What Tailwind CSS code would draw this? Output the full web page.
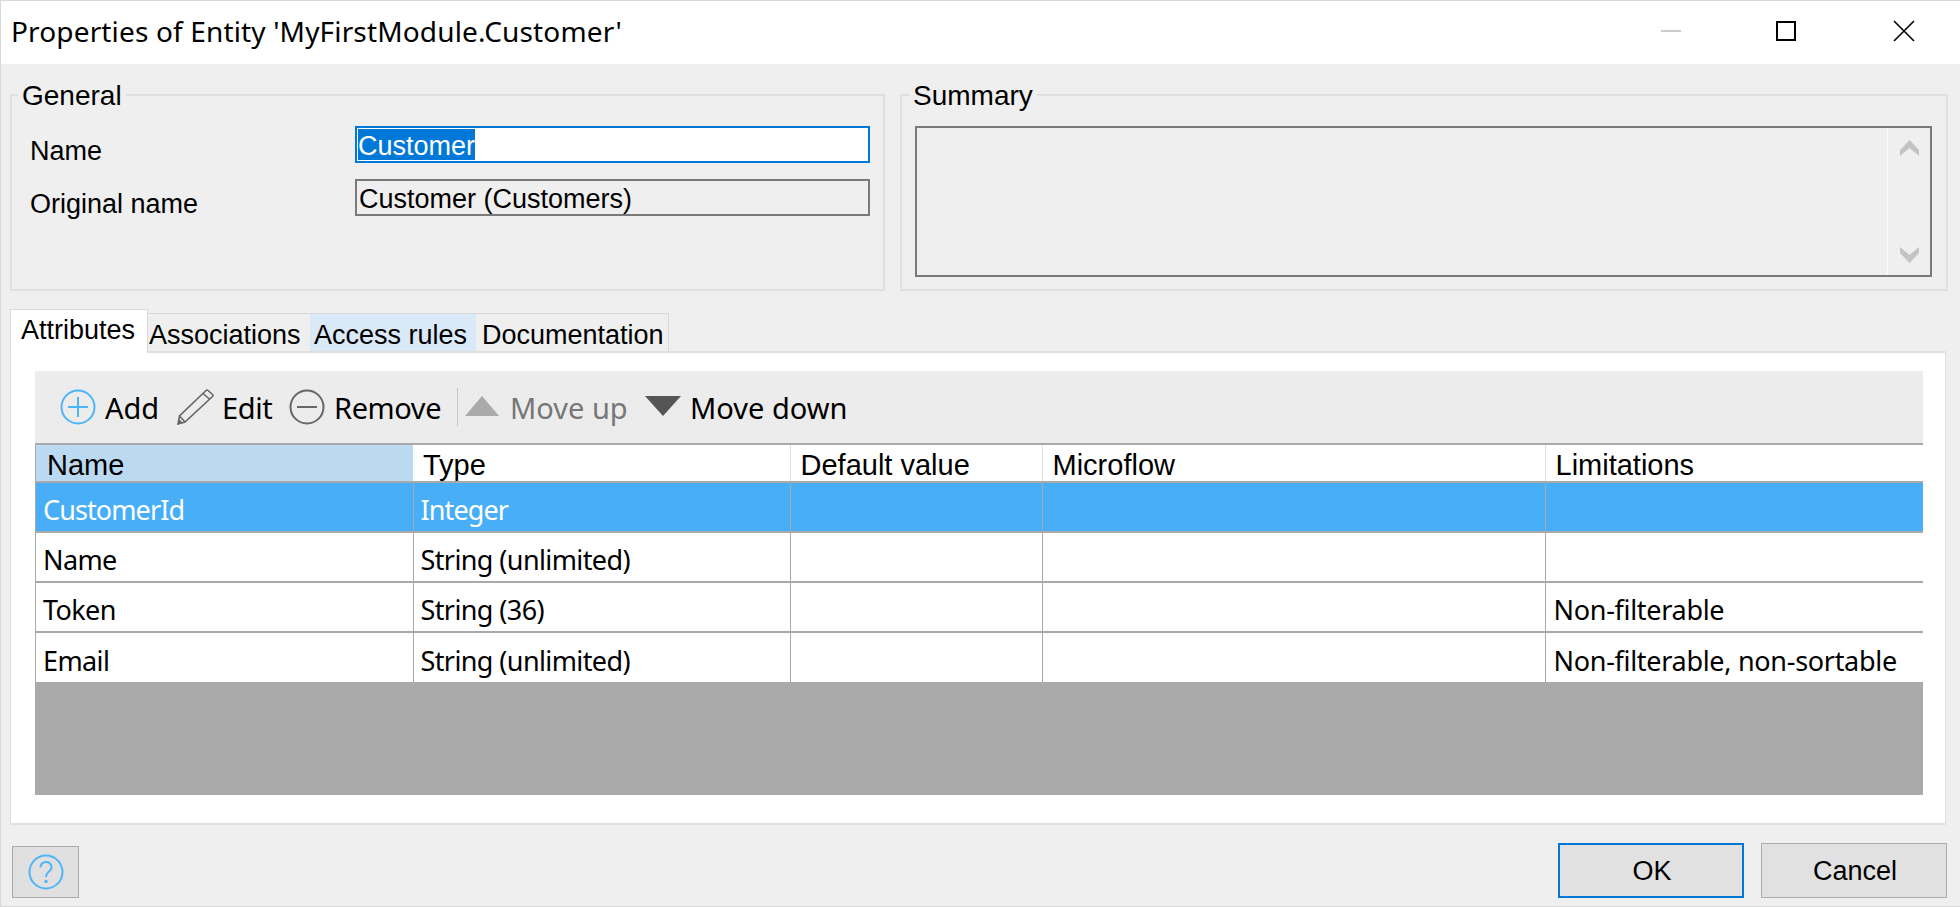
<!DOCTYPE html>
<html lang="en">
<head>
    <meta charset="UTF-8">
    <title>Properties of Entity</title>
    <script src="https://cdn.jsdelivr.net/npm/@tailwindcss/browser@4"></script>
</head>
<body class="bg-[#efefef] overflow-hidden">
    <div class="w-[1960px] h-[907px] flex flex-col border-t border-l border-b border-[#d9d9d9] font-['Liberation_Sans',sans-serif] text-[27px] text-black">

        <!-- Title bar -->
        <div class="h-[63px] shrink-0 bg-white flex items-center pl-[10px] pb-[4px] font-['Noto_Sans',sans-serif]">
            <div class="flex-1 text-[28px] tracking-[0.15px]">Properties of Entity 'MyFirstModule.Customer'</div>
            <svg width="20" height="20" viewBox="0 0 20 20" class="mr-[95px]"><path d="M0 10H20" stroke="#cccccc" stroke-width="2"/></svg>
            <svg width="20" height="20" viewBox="0 0 20 20" class="mr-[97px]"><rect x="1" y="1" width="18" height="18" fill="none" stroke="#000" stroke-width="2"/></svg>
            <svg width="22" height="22" viewBox="0 0 22 22" class="mr-[45px]"><path d="M1 1L21 21M21 1L1 21" stroke="#000" stroke-width="1.6"/></svg>
        </div>

        <!-- General and Summary -->
        <div class="flex gap-[15px] pl-[9px] pt-[30px] pr-[12px] h-[227px] shrink-0">
            <div class="relative w-[875px] h-[197px] border-2 border-[#e0e0e0]">
                <div class="absolute left-[6px] top-[-20px] bg-[#efefef] px-[4px] leading-[40px] text-[28px]">General</div>
                <div class="pl-[18px] pt-[30px] flex flex-col gap-[16px]">
                    <div class="flex items-center h-[37px]">
                        <div class="w-[325px] pt-[14px]">Name</div>
                        <div class="w-[515px] h-[37px] bg-white border-2 border-[#0078d7] flex items-center pl-[1px]">
                            <span class="h-[31px] bg-[#0078d7] text-white leading-[35px]">Customer</span>
                        </div>
                    </div>
                    <div class="flex items-center h-[37px]">
                        <div class="w-[325px] pt-[14px]">Original name</div>
                        <div class="w-[515px] h-[37px] border-2 border-[#7a7a7a] flex items-center pl-[2px] pt-[3px]">Customer (Customers)</div>
                    </div>
                </div>
            </div>
            <div class="relative flex-1 h-[197px] border-2 border-[#e0e0e0]">
                <div class="absolute left-[7px] top-[-20px] bg-[#efefef] px-[4px] leading-[40px] text-[28px]">Summary</div>
                <div class="mt-[30px] ml-[13px] w-[1017px] h-[151px] border-2 border-[#7a7a7a] flex justify-end">
                    <div class="w-[43px] border-l border-[#fafafa] flex flex-col items-center justify-between py-[12px]">
                        <svg width="19" height="16" viewBox="0 0 19 16"><path d="M9.5 0L19 10V16L9.5 8L0 16V10Z" fill="#c4c4c4"/></svg>
                        <svg width="19" height="16" viewBox="0 0 19 16"><path d="M9.5 16L19 6V0L9.5 8L0 0V6Z" fill="#c4c4c4"/></svg>
                    </div>
                </div>
            </div>
        </div>

        <!-- Tabs -->
        <div class="relative z-10 flex items-end h-[60px] shrink-0 pl-[9px]">
            <div class="w-[138px] h-[44px] mb-[-2px] bg-white border border-b-0 border-[#d9d9d9] pl-[10px]">Attributes</div>
            <div class="w-[162px] h-[38px] border-t border-[#d9d9d9] pl-[1px] pt-[1px]">Associations</div>
            <div class="w-[166px] h-[38px] bg-[#d9e9f8] border-t border-[#d9d9d9] pl-[4px] pt-[1px]">Access rules</div>
            <div class="w-[193px] h-[38px] border-t border-r border-[#d9d9d9] pl-[6px] pt-[1px]">Documentation</div>
        </div>

        <!-- Tab panel -->
        <div class="ml-[9px] w-[1936px] h-[474px] shrink-0 bg-white border-x border-y-2 border-[#e0e0e0] pl-[24px] pr-[22px] pt-[18px] pb-[28px] flex flex-col">
            <!-- Toolbar -->
            <div class="h-[72px] shrink-0 bg-[#ececec] flex items-center pl-[25px] font-['Noto_Sans',sans-serif] text-[29px]">
                <svg width="36" height="36" viewBox="0 0 36 36"><circle cx="18" cy="18" r="16.5" fill="none" stroke="#4db5fa" stroke-width="2"/><path d="M18 8V28M8 18H28" stroke="#4db5fa" stroke-width="2"/></svg>
                <span class="ml-[9px] w-[72px] pt-[2px]">Add</span>
                <svg width="38" height="36" viewBox="0 0 38 36"><path d="M1 35L2.5 27L29 1.5Q30 .7 31 1.5L35.5 5.5Q36.5 6.5 35.5 7.5L8 33Z M2.5 27L8 33 M26 4.5L33 10.5" fill="none" stroke="#666" stroke-width="1.6"/><path d="M1 35L2 30L6 34Z" fill="#666"/></svg>
                <span class="ml-[7px] w-[67px] pt-[2px] tracking-[-0.4px]">Edit</span>
                <svg width="36" height="36" viewBox="0 0 36 36"><circle cx="18" cy="18" r="16.5" fill="none" stroke="#666" stroke-width="2"/><path d="M8 18H28" stroke="#666" stroke-width="2"/></svg>
                <span class="ml-[9px] w-[123px] pt-[2px] tracking-[-0.4px]">Remove</span>
                <div class="w-px h-[38px] bg-[#c8c8c8]"></div>
                <svg width="34" height="20" viewBox="0 0 34 20" class="ml-[7px] mb-[2px]"><path d="M17 0L34 20H0Z" fill="#aaaaaa"/></svg>
                <span class="ml-[11px] w-[135px] pt-[2px] text-[#777777]">Move up</span>
                <svg width="36" height="20" viewBox="0 0 36 20" class="mb-[2px]"><path d="M0 0H36L18 20Z" fill="#555555"/></svg>
                <span class="ml-[9px] pt-[2px]">Move down</span>
            </div>
            <!-- Attributes table -->
            <div class="flex-1 bg-[#aaaaaa] border-t-2 border-[#a9a9a9]">
                <table class="table-fixed w-[1887px] ml-px border-collapse bg-white">
                    <colgroup>
                        <col class="w-[377px]"><col class="w-[377px]"><col class="w-[252px]"><col class="w-[503px]"><col class="w-[378px]">
                    </colgroup>
                    <thead class="text-[29px] leading-none">
                        <tr class="h-[37px] border-b-2 border-[#a9a9a9] text-left">
                            <th class="font-normal bg-[#bbdaf2] pl-[11px] pt-[5px]">Name</th>
                            <th class="font-normal pl-[10px] pt-[5px]">Type</th>
                            <th class="font-normal pl-[10px] pt-[5px] border-l border-[#e0e0e0]">Default value</th>
                            <th class="font-normal pl-[10px] pt-[5px] border-l border-[#e0e0e0]">Microflow</th>
                            <th class="font-normal pl-[10px] pt-[5px] border-l border-[#e0e0e0]">Limitations</th>
                        </tr>
                    </thead>
                    <tbody class="font-['Noto_Sans',sans-serif] tracking-[-0.6px]">
                        <tr class="h-[50px] bg-[#47aef7] text-white border-b-2 border-[#a9a9a9] tracking-[-0.9px]">
                            <td class="pl-[7px] pt-[7px]">CustomerId</td>
                            <td class="pl-[7px] pt-[7px] border-l border-[#a9a9a9]">Integer</td>
                            <td class="border-l border-[#a9a9a9]"></td>
                            <td class="border-l border-[#a9a9a9]"></td>
                            <td class="border-l border-[#a9a9a9]"></td>
                        </tr>
                        <tr class="h-[50px] border-b-2 border-[#a9a9a9]">
                            <td class="pl-[7px] pt-[7px]">Name</td>
                            <td class="pl-[7px] pt-[7px] border-l border-[#a9a9a9]">String (unlimited)</td>
                            <td class="border-l border-[#a9a9a9]"></td>
                            <td class="border-l border-[#a9a9a9]"></td>
                            <td class="border-l border-[#a9a9a9]"></td>
                        </tr>
                        <tr class="h-[50px] border-b-2 border-[#a9a9a9]">
                            <td class="pl-[7px] pt-[7px]">Token</td>
                            <td class="pl-[7px] pt-[7px] border-l border-[#a9a9a9]">String (36)</td>
                            <td class="border-l border-[#a9a9a9]"></td>
                            <td class="border-l border-[#a9a9a9]"></td>
                            <td class="pl-[8px] pt-[7px] border-l border-[#a9a9a9] tracking-[-0.3px]">Non-filterable</td>
                        </tr>
                        <tr class="h-[50px]">
                            <td class="pl-[7px] pt-[7px]">Email</td>
                            <td class="pl-[7px] pt-[7px] border-l border-[#a9a9a9]">String (unlimited)</td>
                            <td class="border-l border-[#a9a9a9]"></td>
                            <td class="border-l border-[#a9a9a9]"></td>
                            <td class="pl-[8px] pt-[7px] border-l border-[#a9a9a9] tracking-[-0.3px]">Non-filterable, non-sortable</td>
                        </tr>
                    </tbody>
                </table>
            </div>
        </div>

        <!-- Footer -->
        <div class="flex items-end flex-1 pl-[11px] pr-[13px] pb-[8px]">
            <div class="w-[67px] h-[52px] bg-[#e0e0e0] border border-[#a9a9a9] flex items-center justify-center mr-auto">
                <svg width="36" height="36" viewBox="0 0 36 36"><circle cx="18" cy="18" r="16.5" fill="none" stroke="#4db5fa" stroke-width="2"/><path d="M12.5 13.5Q13 8 18 8T23.5 13Q23.5 16 20.5 18Q18 20 18 23" fill="none" stroke="#4db5fa" stroke-width="2"/><circle cx="18" cy="27.5" r="1.7" fill="#4db5fa"/></svg>
            </div>
            <button class="w-[186px] h-[55px] bg-[#e1e1e1] border-2 border-[#0078d7] mr-[17px] pl-[2px] pt-[2px]">OK</button>
            <button class="w-[186px] h-[55px] bg-[#e1e1e1] border border-[#adadad] pl-[2px] pt-[2px]">Cancel</button>
        </div>
    </div>
</body>
</html>
